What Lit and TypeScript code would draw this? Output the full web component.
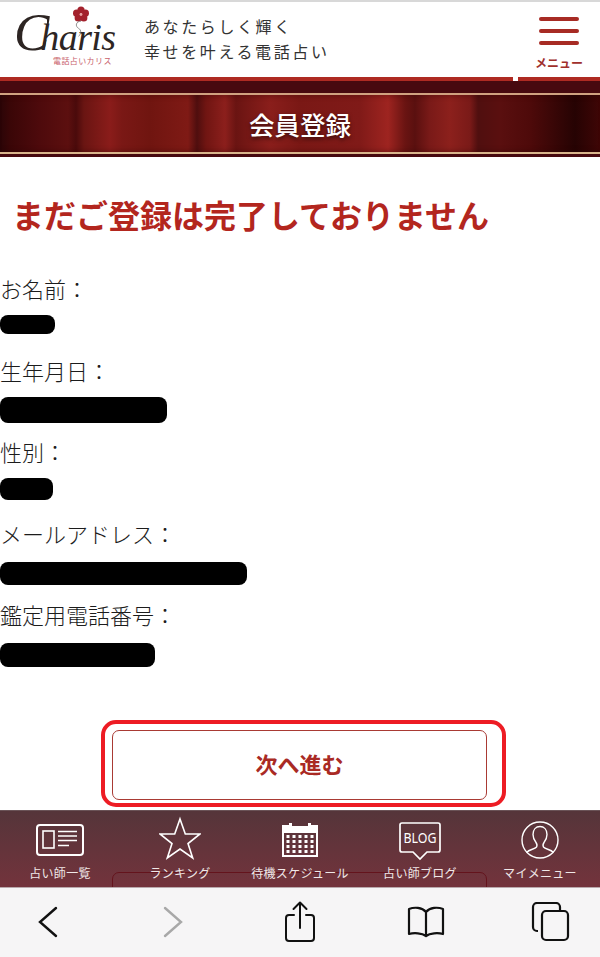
import { LitElement, html, css, svg } from "lit";
import { customElement } from "lit/decorators.js";

const rows = [
  { label: "お名前：", w: 55, h: 19, gap: 12 },
  { label: "生年月日：", w: 167, h: 26, gap: 12 },
  { label: "性別：", w: 53, h: 22, gap: 12 },
  { label: "メールアドレス：", w: 247, h: 23, gap: 14 },
  { label: "鑑定用電話番号：", w: 155, h: 24, gap: 14 },
];

const tabIcons = [
  svg`<svg width="48" height="50" viewBox="0 0 48 50" fill="none" stroke="#fff"><rect x="1" y="9" width="46" height="30" rx="3" stroke-width="2"/><rect x="7" y="15" width="11" height="17" stroke-width="1.6"/><path d="M22 15.5h19M22 20h19M22 24.500h19M22 29.500h11" stroke-width="1.500"/></svg>`,
  svg`<svg width="42" height="50" viewBox="0 0 42 50" fill="none" stroke="#fff" stroke-width="1.600"><path d="M21 3l5.300 15H41L29 27.500l4.700 14.500L21 33 8.300 42 13 27.500 1 18h14.700z"/></svg>`,
  svg`<svg width="36" height="50" viewBox="0 0 36 50" fill="#fff"><path d="M0 9h7V7h3v3h16V7h3v2h7v32H0zM2 17v22h32V17z"/><g>${[20, 25, 30, 35].map((y) => [6, 12, 18, 24, 30].map((x) => svg`<rect x="${x - 1.500}" y="${y - 1}" width="3" height="3"/>`))}</g></svg>`,
  svg`<svg width="42" height="50" viewBox="0 0 42 50" fill="none" stroke="#fff" stroke-width="1.700"><path d="M3 7h36a2 2 0 0 1 2 2v25a2 2 0 0 1-2 2H28l-7 7-7-7H3a2 2 0 0 1-2-2V9a2 2 0 0 1 2-2z"/><text x="21" y="27" text-anchor="middle" fill="#fff" stroke="none" font-family="'Noto Sans','Liberation Sans',sans-serif" font-size="14" textLength="33" lengthAdjust="spacingAndGlyphs">BLOG</text></svg>`,
  svg`<svg width="40" height="50" viewBox="0 0 40 50" fill="none" stroke="#fff" stroke-width="1.400"><circle cx="20" cy="24" r="18"/><path d="M6.500 36.500c3-3.500 8-3 10-5.500 1-1.500.5-3-.5-4.500-2-2.500-3-5-3-8 0-5 3-8 7-8s7 3 7 8c0 3-1 5.500-3 8-1 1.500-1.500 3-.5 4.500 2 2.500 7 2 10 5.500"/></svg>`,
];
const tabLabels = ["占い師一覧", "ランキング", "待機スケジュール", "占い師ブログ", "マイメニュー"];

@customElement("app-root")
export class AppRoot extends LitElement {
  static styles = css`
    :host {
      display: block;
      width: 600px;
      height: 957px;
      overflow: hidden;
      background: #fff;
      font-family: "Liberation Sans", "Noto Sans CJK JP", sans-serif;
      color: #222;
    }
    .screen { display: flex; flex-direction: column; height: 957px; }
    .topline { height: 2px; background: #d8d8d8; flex: none; }
    .header {
      height: 75px; flex: none; display: flex; align-items: stretch; padding-left: 14px;
    }
    .logo { width: 130px; flex: none; position: relative; }
    .word {
      font-family: "Liberation Serif", serif; font-style: italic; color: #2d2523;
      white-space: nowrap; height: 42px; margin-top: 9px; line-height: 42px; font-size: 38px; letter-spacing: -0.600px;
    }
    .word b { font-weight: 400; font-size: 53px; letter-spacing: -9px; line-height: 42px; }
    .flower { position: absolute; left: 59px; top: 4px; }
    .logo small {
      display: block; font-family: "Noto Sans CJK JP", sans-serif; font-size: 8px; color: #c8606a;
      letter-spacing: .4px; margin: 3px 0 0 39px; line-height: 10px;
    }
    .tag {
      font-family: "Noto Sans CJK JP", sans-serif; font-size: 16px; letter-spacing: 2.600px;
      line-height: 25px; color: #333; padding-top: 12px; flex: 1; font-weight: 400;
    }
    .menu { width: 62px; flex: none; display: flex; flex-direction: column; align-items: center; padding-top: 15px; margin-right: 10px; }
    .menu i { display: block; width: 40px; height: 4px; border-radius: 2px; background: #a72b24; margin-bottom: 8px; }
    .menu span {
      font-family: "Noto Sans CJK JP", sans-serif; font-size: 12px; font-weight: 700; color: #a0302c;
      line-height: 14px; margin-top: 3px; white-space: nowrap;
    }
    .redline { height: 4px; flex: none; background: linear-gradient(90deg, #ae2a22 0 85.500%, #fff 85.500% 86.300%, #ae2a22 86.300%); }
    .banner {
      height: 76px; flex: none; box-sizing: border-box; background: #47090f; padding: 12px 0 3px; display: flex;
    }
    .curtain {
      flex: 1; border-top: 2px solid #d0a280; border-bottom: 2px solid #d9b58c;
      display: flex; align-items: center; justify-content: center;
      font-family: "Noto Sans CJK JP", sans-serif; font-size: 25.500px; font-weight: 500; color: #fff;
      text-shadow: 0 2px 4px rgba(0,0,0,.6);
      box-shadow: inset 0 5px 4px -3px rgba(40,0,0,.25), inset 0 -5px 4px -3px rgba(40,0,0,.25);
      background: linear-gradient(90deg, #2b0507 0px, #3a0607 10px, #4e0a0c 40px, #5c0f0f 68px, #4a0a0b 76px, #6a1512 84px, #8a1c1a 110px, #7a1815 122px, #701510 150px, #7f1a15 188px, #4f0e0e 197px, #701512 206px, #8c1f1c 225px, #6a1412 236px, #8a1e1b 270px, #7a1815 300px, #801a18 360px, #9e2420 388px, #6a1412 405px, #5a100f 415px, #7a1a18 430px, #8c201c 450px, #7a1a18 470px, #500f0f 478px, #5a0f0f 500px, #4e0a0a 530px, #260303 575px, #3f0606 600px);
    }
    h1 {
      margin: 39px 0 0 12px; font-family: "Noto Sans CJK JP", sans-serif; font-size: 32px; line-height: 36px;
      font-weight: 700; color: #b3261e; white-space: nowrap;
    }
    .rows { margin-top: 41px; flex: 1; }
    .row { height: 81.500px; font-family: "Noto Sans CJK JP", sans-serif; font-size: 22px; line-height: 30px; font-weight: 300; color: #1c1c1c; white-space: nowrap; }
    .row .v { background: #000; border-radius: 8px; }
    .cta-wrap { flex: none; padding-left: 101px; margin-bottom: 3px; }
    .ring {
      box-sizing: border-box; width: 405px; height: 87px; border: 4px solid #ed1c24; border-radius: 15px;
      padding: 6px 15px 3px 7px;
    }
    .cta {
      box-sizing: border-box; height: 100%; border: 1.500px solid #a93a34; border-radius: 7px; padding-bottom: 5px;
      display: flex; align-items: center; justify-content: center;
      font-family: "Noto Sans CJK JP", sans-serif; font-weight: 700; font-size: 22px; color: #a92a24;
    }
    .tabs {
      flex: none; height: 77px; position: relative; display: grid; grid-template-columns: repeat(5, 120px); overflow: hidden;
      background: linear-gradient(180deg, #55353a, #73333c); border-top: 1px solid #6a5357; box-sizing: border-box;
    }
    .ghost {
      position: absolute; left: 112px; top: 61px; width: 375px; height: 30px;
      border: 1.500px solid #64131c; border-radius: 7px; box-sizing: border-box;
    }
    .tab { display: flex; flex-direction: column; align-items: center; position: relative; color: #f0e8e8; padding-top: 5px; }
    .tab svg { display: block; }
    .tab span {
      font-family: "Noto Sans CJK JP", sans-serif; font-size: 12px; line-height: 14px; white-space: nowrap; letter-spacing: .3px;
    }
    .bar {
      flex: none; height: 70px; background: #f6f5f6; border-top: 1px solid #b9a9ac; box-sizing: border-box;
      display: grid; grid-template-columns: 96px 154px 100px 152px 98px; align-items: center; justify-items: center; padding-bottom: 2px;
    }
    .bar svg { display: block; }
  `;

  render() {
    return html`<div class="screen">
      <div class="topline"></div>
      <header class="header">
        <div class="logo">
          <svg class="flower" width="16" height="32" viewBox="0 0 20 40" fill="none">
            <g fill="#a3212c">
              <circle cx="10" cy="5" r="4.500"/><circle cx="15.500" cy="9" r="4.500"/><circle cx="13.500" cy="15" r="4.500"/><circle cx="6.500" cy="15" r="4.500"/><circle cx="4.500" cy="9" r="4.500"/>
            </g>
            <circle cx="10" cy="10.500" r="1.800" fill="#e8a0a0"/>
            <path d="M10 19c-6 0-8 6-3 9 4 2 3 7 0 10" stroke="#777" stroke-width="1"/>
          </svg>
          <div class="word"><b>C</b>haris</div>
          <small>電話占いカリス</small>
        </div>
        <div class="tag">あなたらしく輝く<br />幸せを叶える電話占い</div>
        <div class="menu"><i></i><i></i><i></i><span>メニュー</span></div>
      </header>
      <div class="redline"></div>
      <div class="banner"><div class="curtain">会員登録</div></div>
      <h1>まだご登録は完了しておりません</h1>
      <div class="rows">
        ${rows.map(
          (r) => html`<div class="row">
            <div>${r.label}</div>
            <div class="v" style="width:${r.w}px;height:${r.h}px;margin-top:${r.gap}px"></div>
          </div>`
        )}
      </div>
      <div class="cta-wrap"><div class="ring"><div class="cta">次へ進む</div></div></div>
      <nav class="tabs">
        <div class="ghost"></div>
        ${tabLabels.map((l, i) => html`<div class="tab">${tabIcons[i]}<span>${l}</span></div>`)}
      </nav>
      <div class="bar">
        <svg width="24" height="34" viewBox="0 0 24 34" fill="none" stroke="#111" stroke-width="2.400" stroke-linecap="round"><path d="M20 3L4 17l16 14"/></svg>
        <svg width="24" height="34" viewBox="0 0 24 34" fill="none" stroke="#a8a8a8" stroke-width="2.400" stroke-linecap="round"><path d="M4 3l16 14L4 31"/></svg>
        <svg width="32" height="44" viewBox="0 0 32 44" fill="none" stroke="#111" stroke-width="2" stroke-linecap="round" stroke-linejoin="round"><path d="M10 15H5a3 3 0 0 0-3 3v20a3 3 0 0 0 3 3h22a3 3 0 0 0 3-3V18a3 3 0 0 0-3-3h-5"/><path d="M16 28V3M9.500 9L16 2.500 22.500 9"/></svg>
        <svg width="38" height="34" viewBox="0 0 38 34" fill="none" stroke="#111" stroke-width="2.200" stroke-linejoin="round"><path d="M19 7C15 2 7 2 2 4v25c5-1.500 13-1 17 2 4-3 12-3.500 17-2V4C31 2 23 2 19 7zM19 7v24"/></svg>
        <svg width="40" height="40" viewBox="0 0 40 40" fill="none" stroke="#111" stroke-width="2.200"><path d="M7 29H6a4 4 0 0 1-4-4V5a4 4 0 0 1 4-4h19a4 4 0 0 1 4 4v4"/><rect x="11" y="9" width="26" height="29" rx="4"/></svg>
      </div>
    </div>`;
  }
}
